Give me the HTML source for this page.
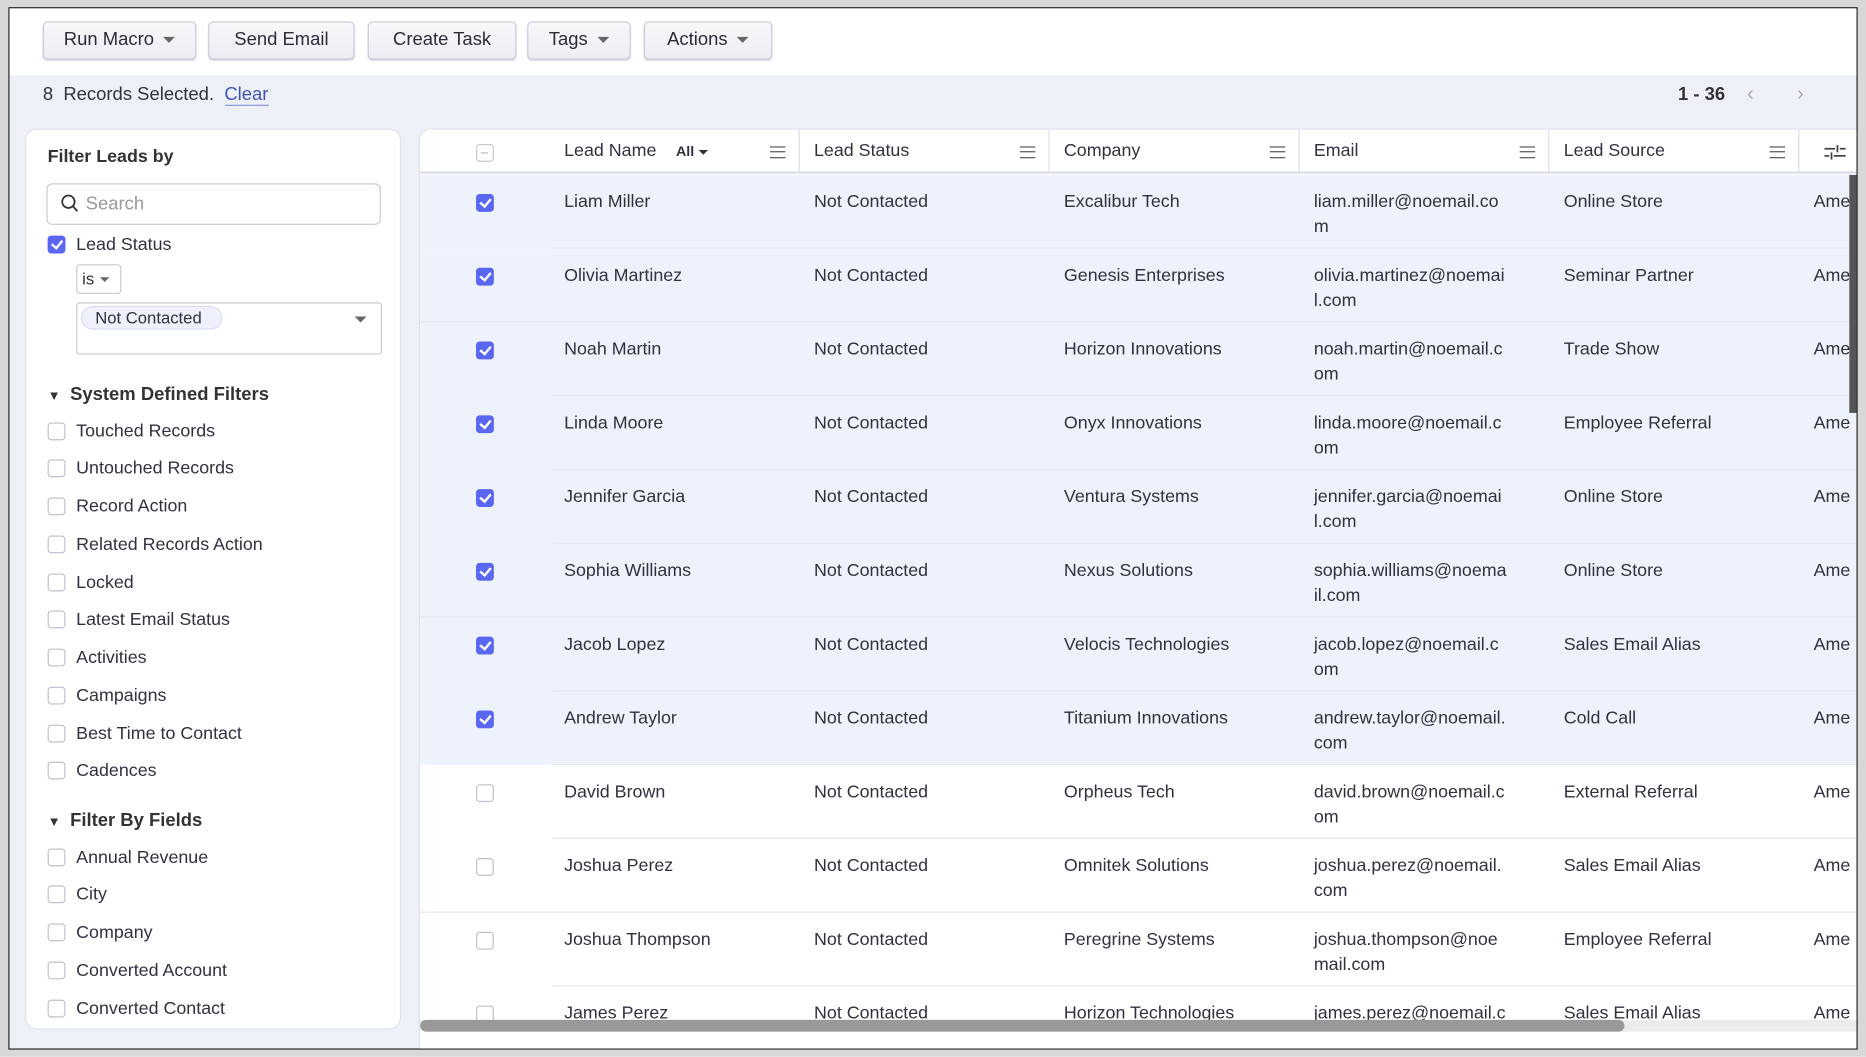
<!DOCTYPE html>
<html><head><meta charset="utf-8"><style>
*{box-sizing:border-box;margin:0;padding:0}
html,body{width:1866px;height:1057px;overflow:hidden;background:#fff}
#s{position:absolute;left:0;top:0;width:1568px;height:888.2px;transform:scale(1.19005);transform-origin:0 0;font-family:"Liberation Sans",sans-serif;color:#2f3240;font-size:15px;background:#d8d8d8}
.frame{position:absolute;left:7px;top:6px;width:1554px;height:876px;border:1.5px solid #222;background:#eef0f8;overflow:hidden}
.tb{position:absolute;left:0;top:0;right:0;height:56px;background:#fff}
.btn{position:absolute;top:11px;height:32px;border:1px solid #c9cbd8;border-radius:4px;background:linear-gradient(#f8f8fb,#eceef4);font-size:15.5px;line-height:30px;text-align:center;color:#2a2c38;box-shadow:0 1px 1px #d8dae4}
.car{display:inline-block;width:0;height:0;border-left:5px solid transparent;border-right:5px solid transparent;border-top:5px solid #666;vertical-align:middle;margin-left:8px}
.a{position:absolute;white-space:nowrap}
.panel{position:absolute;background:#fff;border:1px solid #e0e2ec;border-radius:10px}
.cb{position:absolute;width:15px;height:15px;border:1.5px solid #bfc1cc;border-radius:3px;background:#fff}
.cb.on{background:#5a67f2;border-color:#5a67f2}
.cb.on:after{content:"";position:absolute;left:4px;top:1px;width:4px;height:7px;border:solid #fff;border-width:0 2px 2px 0;transform:rotate(40deg)}
.hm{position:absolute;width:13px;height:10px;border-top:1.5px solid #555;border-bottom:1.5px solid #555}
.hm:after{content:"";position:absolute;left:0;right:0;top:2.8px;border-top:1.5px solid #555}
.sep{position:absolute;top:0;width:1px;height:36px;background:#dcdde6}
.row{position:absolute;left:0;width:1210px;height:62px}
.row .t{position:absolute;top:12px;line-height:21px;white-space:nowrap}
.rl{position:absolute;left:111px;right:0;bottom:0;height:1px;background:#e3e5ee}
</style></head><body><div id="s">
<div class="frame">
<div class="tb">
<div class="btn" style="left:28px;width:129px">Run Macro<span class="car"></span></div>
<div class="btn" style="left:167px;width:123px">Send Email</div>
<div class="btn" style="left:301px;width:125px">Create Task</div>
<div class="btn" style="left:435px;width:87px">Tags<span class="car"></span></div>
<div class="btn" style="left:533px;width:108px">Actions<span class="car"></span></div>
</div>
<div class="a" style="left:28px;top:64px;font-size:15.5px">8&nbsp; Records Selected.&nbsp; <span style="color:#3f51b5;border-bottom:1px solid #8a96d8">Clear</span></div>
<div class="a" style="left:1402px;top:64px;font-size:15.5px;font-weight:bold;color:#333">1 - 36</div>
<div class="a" style="left:1460px;top:62px;font-size:17px;color:#aaa">&#x2039;</div>
<div class="a" style="left:1502px;top:62px;font-size:17px;color:#aaa">&#x203A;</div>

<div class="panel" style="left:13px;top:101px;width:316px;height:757px">
<div class="a" style="left:18px;top:14px;font-size:15px;font-weight:bold;color:#333">Filter Leads by</div>
<div class="a" style="left:17px;top:45px;width:281px;height:35px;border:1px solid #c9cbd5;border-radius:5px"></div>
<svg class="a" style="left:29px;top:54px" width="16" height="17"><circle cx="6.5" cy="6.5" r="5.2" fill="none" stroke="#333" stroke-width="1.5"/><line x1="10.3" y1="10.3" x2="14" y2="14.5" stroke="#333" stroke-width="1.5"/></svg>
<div class="a" style="left:50px;top:54px;color:#999;font-size:15.5px">Search</div>
<div class="cb on" style="left:18px;top:89px"></div>
<div class="a" style="left:42px;top:88px;font-size:15px">Lead Status</div>
<div class="a" style="left:42px;top:113px;width:38px;height:25px;border:1px solid #c9cbd5;border-radius:3px;line-height:23px;padding-left:4px;font-size:14px">is<span class="car" style="margin-left:5px;border-width:4px 4px 0"></span></div>
<div class="a" style="left:42px;top:145px;width:257px;height:44px;border:1px solid #c9cbd5;border-radius:3px"></div>
<div class="a" style="left:46px;top:148px;height:20px;padding:0 16px 0 11px;border:1px solid #d7dbf3;border-radius:10px;background:#eef0fb;font-size:14px;line-height:18px">Not Contacted</div>
<div class="car a" style="left:276px;top:157px;margin:0;border-top-color:#666"></div>
<div class="a" style="left:18px;top:214px;font-size:15.5px;font-weight:bold;color:#333"><span style="font-size:11px;margin-right:8px">&#9660;</span>System Defined Filters</div>
<div class="cb" style="left:18px;top:246px"></div><div class="a" style="left:42px;top:245px">Touched Records</div>
<div class="cb" style="left:18px;top:277px"></div><div class="a" style="left:42px;top:276px">Untouched Records</div>
<div class="cb" style="left:18px;top:309px"></div><div class="a" style="left:42px;top:308px">Record Action</div>
<div class="cb" style="left:18px;top:341px"></div><div class="a" style="left:42px;top:340px">Related Records Action</div>
<div class="cb" style="left:18px;top:373px"></div><div class="a" style="left:42px;top:372px">Locked</div>
<div class="cb" style="left:18px;top:404px"></div><div class="a" style="left:42px;top:403px">Latest Email Status</div>
<div class="cb" style="left:18px;top:436px"></div><div class="a" style="left:42px;top:435px">Activities</div>
<div class="cb" style="left:18px;top:468px"></div><div class="a" style="left:42px;top:467px">Campaigns</div>
<div class="cb" style="left:18px;top:500px"></div><div class="a" style="left:42px;top:499px">Best Time to Contact</div>
<div class="cb" style="left:18px;top:531px"></div><div class="a" style="left:42px;top:530px">Cadences</div>
<div class="a" style="left:18px;top:572px;font-size:15.5px;font-weight:bold;color:#333"><span style="font-size:11px;margin-right:8px">&#9660;</span>Filter By Fields</div>
<div class="cb" style="left:18px;top:604px"></div><div class="a" style="left:42px;top:603px">Annual Revenue</div>
<div class="cb" style="left:18px;top:635px"></div><div class="a" style="left:42px;top:634px">City</div>
<div class="cb" style="left:18px;top:667px"></div><div class="a" style="left:42px;top:666px">Company</div>
<div class="cb" style="left:18px;top:699px"></div><div class="a" style="left:42px;top:698px">Converted Account</div>
<div class="cb" style="left:18px;top:731px"></div><div class="a" style="left:42px;top:730px">Converted Contact</div>
</div>

<div class="panel" style="left:344px;top:101px;width:1220px;height:790px;overflow:hidden;border-radius:10px 0 0 10px">
<div class="a" style="left:0;top:0;width:1220px;height:37px;background:#fff;border-bottom:2px solid #dcdce8"></div>
<div class="cb" style="left:47px;top:12px;border-color:#c7c8d2"><div style="position:absolute;left:3px;top:5.5px;width:6px;height:1.5px;background:#bbb"></div></div>
<div class="a" style="left:121px;top:9px">Lead Name</div>
<div class="a" style="left:215px;top:11px;font-size:12px;font-weight:bold">All<span class="car" style="margin-left:4px;border-width:4px 4px 0;border-top-color:#333"></span></div>
<div class="hm" style="left:294px;top:14px"></div><div class="sep" style="left:318px"></div>
<div class="a" style="left:331px;top:9px">Lead Status</div>
<div class="hm" style="left:504px;top:14px"></div><div class="sep" style="left:528px"></div>
<div class="a" style="left:541px;top:9px">Company</div>
<div class="hm" style="left:714px;top:14px"></div><div class="sep" style="left:738px"></div>
<div class="a" style="left:751px;top:9px">Email</div>
<div class="hm" style="left:924px;top:14px"></div><div class="sep" style="left:948px"></div>
<div class="a" style="left:961px;top:9px">Lead Source</div>
<div class="hm" style="left:1134px;top:14px"></div><div class="sep" style="left:1158px"></div>
<svg class="a" style="left:1180px;top:12px" width="18" height="14"><path d="M0 4H9M13 4H18M11 1V7M0 10H4M8 10H18M6 7V13" stroke="#444" stroke-width="1.5" fill="none"/></svg>
<div style="position:absolute;left:0;top:38px;width:1220px">
<div class="row" style="top:0;background:#eef2fc"><div class="cb on" style="left:47px;top:16px"></div><div class="t" style="left:121px">Liam Miller</div><div class="t" style="left:331px">Not Contacted</div><div class="t" style="left:541px">Excalibur Tech</div><div class="t" style="left:751px">liam.miller@noemail.co<br>m</div><div class="t" style="left:961px">Online Store</div><div class="t" style="left:1171px">Ame</div><div class="rl"></div></div>
<div class="row" style="top:62px;background:#eef2fc"><div class="cb on" style="left:47px;top:16px"></div><div class="t" style="left:121px">Olivia Martinez</div><div class="t" style="left:331px">Not Contacted</div><div class="t" style="left:541px">Genesis Enterprises</div><div class="t" style="left:751px">olivia.martinez@noemai<br>l.com</div><div class="t" style="left:961px">Seminar Partner</div><div class="t" style="left:1171px">Ame</div><div class="rl" style="left:0"></div></div>
<div class="row" style="top:124px;background:#eef2fc"><div class="cb on" style="left:47px;top:16px"></div><div class="t" style="left:121px">Noah Martin</div><div class="t" style="left:331px">Not Contacted</div><div class="t" style="left:541px">Horizon Innovations</div><div class="t" style="left:751px">noah.martin@noemail.c<br>om</div><div class="t" style="left:961px">Trade Show</div><div class="t" style="left:1171px">Ame</div><div class="rl"></div></div>
<div class="row" style="top:186px;background:#eef2fc"><div class="cb on" style="left:47px;top:16px"></div><div class="t" style="left:121px">Linda Moore</div><div class="t" style="left:331px">Not Contacted</div><div class="t" style="left:541px">Onyx Innovations</div><div class="t" style="left:751px">linda.moore@noemail.c<br>om</div><div class="t" style="left:961px">Employee Referral</div><div class="t" style="left:1171px">Ame</div><div class="rl"></div></div>
<div class="row" style="top:248px;background:#eef2fc"><div class="cb on" style="left:47px;top:16px"></div><div class="t" style="left:121px">Jennifer Garcia</div><div class="t" style="left:331px">Not Contacted</div><div class="t" style="left:541px">Ventura Systems</div><div class="t" style="left:751px">jennifer.garcia@noemai<br>l.com</div><div class="t" style="left:961px">Online Store</div><div class="t" style="left:1171px">Ame</div><div class="rl"></div></div>
<div class="row" style="top:310px;background:#eef2fc"><div class="cb on" style="left:47px;top:16px"></div><div class="t" style="left:121px">Sophia Williams</div><div class="t" style="left:331px">Not Contacted</div><div class="t" style="left:541px">Nexus Solutions</div><div class="t" style="left:751px">sophia.williams@noema<br>il.com</div><div class="t" style="left:961px">Online Store</div><div class="t" style="left:1171px">Ame</div><div class="rl" style="left:0"></div></div>
<div class="row" style="top:372px;background:#eef2fc"><div class="cb on" style="left:47px;top:16px"></div><div class="t" style="left:121px">Jacob Lopez</div><div class="t" style="left:331px">Not Contacted</div><div class="t" style="left:541px">Velocis Technologies</div><div class="t" style="left:751px">jacob.lopez@noemail.c<br>om</div><div class="t" style="left:961px">Sales Email Alias</div><div class="t" style="left:1171px">Ame</div><div class="rl"></div></div>
<div class="row" style="top:434px;background:#eef2fc"><div class="cb on" style="left:47px;top:16px"></div><div class="t" style="left:121px">Andrew Taylor</div><div class="t" style="left:331px">Not Contacted</div><div class="t" style="left:541px">Titanium Innovations</div><div class="t" style="left:751px">andrew.taylor@noemail.<br>com</div><div class="t" style="left:961px">Cold Call</div><div class="t" style="left:1171px">Ame</div><div class="rl"></div></div>
<div class="row" style="top:496px;background:#fff"><div class="cb" style="left:47px;top:16px"></div><div class="t" style="left:121px">David Brown</div><div class="t" style="left:331px">Not Contacted</div><div class="t" style="left:541px">Orpheus Tech</div><div class="t" style="left:751px">david.brown@noemail.c<br>om</div><div class="t" style="left:961px">External Referral</div><div class="t" style="left:1171px">Ame</div><div class="rl"></div></div>
<div class="row" style="top:558px;background:#fff"><div class="cb" style="left:47px;top:16px"></div><div class="t" style="left:121px">Joshua Perez</div><div class="t" style="left:331px">Not Contacted</div><div class="t" style="left:541px">Omnitek Solutions</div><div class="t" style="left:751px">joshua.perez@noemail.<br>com</div><div class="t" style="left:961px">Sales Email Alias</div><div class="t" style="left:1171px">Ame</div><div class="rl" style="left:0"></div></div>
<div class="row" style="top:620px;background:#fff"><div class="cb" style="left:47px;top:16px"></div><div class="t" style="left:121px">Joshua Thompson</div><div class="t" style="left:331px">Not Contacted</div><div class="t" style="left:541px">Peregrine Systems</div><div class="t" style="left:751px">joshua.thompson@noe<br>mail.com</div><div class="t" style="left:961px">Employee Referral</div><div class="t" style="left:1171px">Ame</div><div class="rl"></div></div>
<div class="row" style="top:682px;background:#fff"><div class="cb" style="left:47px;top:16px"></div><div class="t" style="left:121px">James Perez</div><div class="t" style="left:331px">Not Contacted</div><div class="t" style="left:541px">Horizon Technologies</div><div class="t" style="left:751px">james.perez@noemail.c<br>om</div><div class="t" style="left:961px">Sales Email Alias</div><div class="t" style="left:1171px">Ame</div></div>
</div>
<div class="a" style="left:0;top:748px;width:1210px;height:10px;background:#ececef;border-radius:0 0 6px 6px"></div>
<div class="a" style="left:0;top:748px;width:1012px;height:10px;background:#999;border-radius:5px"></div>
<div class="a" style="left:0;top:758px;width:1220px;height:40px;background:#fff"></div>
<div class="a" style="left:1201px;top:38px;width:8px;height:200px;background:#555"></div>
</div>
</div>
</div></body></html>
